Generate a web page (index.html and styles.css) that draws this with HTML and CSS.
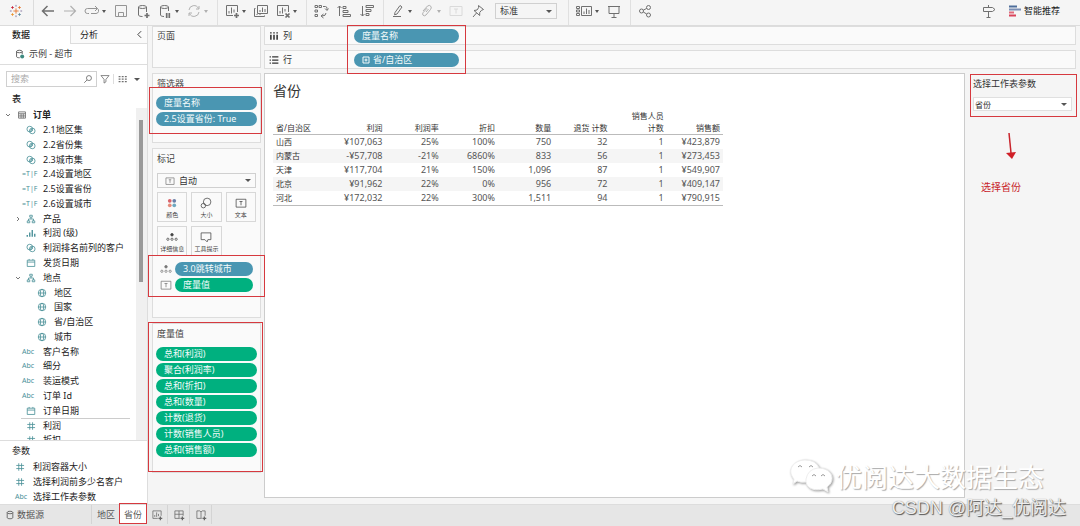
FILE: index.html
```html
<!DOCTYPE html>
<html lang="zh-CN">
<head>
<meta charset="utf-8">
<meta name="viewport" content="width=device-width, initial-scale=1">
<title>示例 - 超市</title>
<link rel="stylesheet" href="styles.css">
</head>
<body>
<svg class="sprite" aria-hidden="true">
  <symbol id="back" viewBox="0 0 16 16"><path d="M14 8H2.500M7.500 3L2.500 8l5 5" stroke-width="1.500"/></symbol>
  <symbol id="forward" viewBox="0 0 16 16"><path d="M2 8h11.500M8.500 3l5 5-5 5" stroke-width="1.200"/></symbol>
  <symbol id="replay" viewBox="0 0 16 16"><path d="M5 10.500H3.500a2.500 2.500 0 0 1 0-5H13M11 3l2.500 2.500L11 8M13.500 5.500q1.500 1 1 3-.5 2-2.500 2H7"/></symbol>
  <symbol id="save" viewBox="0 0 16 16"><path d="M2.500 2.500h11v11h-11zM5.500 13v-3.500h5V13"/></symbol>
  <symbol id="dbadd" viewBox="0 0 16 16"><path d="M3.500 4v8c0 1 2 1.500 4 1.500M11.500 4v5"/><ellipse cx="7.500" cy="4" rx="4" ry="1.500"/><path d="M12 10v5M9.500 12.500h5" stroke-width="1.700"/></symbol>
  <symbol id="dbpause" viewBox="0 0 16 16"><path d="M3.500 4v8c0 1 2 1.500 3.500 1.500M11.500 4v4"/><ellipse cx="7.500" cy="4" rx="4" ry="1.500"/><path d="M9.700 10v5M12.300 10v5" stroke-width="1.700"/></symbol>
  <symbol id="refresh" viewBox="0 0 16 16"><path d="M3 7a5 5 0 0 1 9.500-1.500M13 9a5 5 0 0 1-9.500 1.500M13 3v3h-3M3 13v-3h3"/></symbol>
  <symbol id="newsheet" viewBox="0 0 16 16"><path d="M9 12.500H2.500v-10h11V9M5 10.500V8M7.500 10.500v-6M10 9.500V6.500"/><path d="M12.500 10v5M10 12.500h5" stroke-width="1.700"/></symbol>
  <symbol id="dupsheet" viewBox="0 0 16 16"><path d="M4.500 2.500h10v8h-10zM2.500 5.500h-1v8h10v-1M7 9V7M9.500 9V4.500M12 9V6M4 12v-1M7 12v-1"/></symbol>
  <symbol id="clearsheet" viewBox="0 0 16 16"><path d="M9 12.500H2.500v-10h11V9M5 10.500V8M7.500 10.500v-6M10 8.500V6"/><path d="M10.500 10.500l4 4M14.500 10.500l-4 4" stroke-width="1.700"/></symbol>
  <symbol id="swap" viewBox="0 0 16 16"><path d="M2 2.500h2.500v2H2zM6 2.500h2.500v2H6zM2 7h2.500v2H2zM2 11.500h2.500v2H2zM10 3.500h2.500q1.500 0 1.500 2V7M12 5.500l2 2 1.500-2M13 10q0 3-4 3M10.500 11L8 13l2.500 2"/></symbol>
  <symbol id="sortasc" viewBox="0 0 16 16"><path d="M3.500 13V3M1.500 5l2-2 2 2M7 3.500h3v2H7zM7 7.500h5v2H7zM7 11.500h7.500v2H7z"/></symbol>
  <symbol id="sortdesc" viewBox="0 0 16 16"><path d="M3.500 3v10M1.500 11l2 2 2-2M7 2.500h7.500v2H7zM7 6.500h5v2H7zM7 10.500h3v2H7z"/></symbol>
  <symbol id="pen" viewBox="0 0 16 16"><path d="M5 9.500l5-7 2 1.500-5 7-2.500.8zM3 13.500h8"/></symbol>
  <symbol id="clip" viewBox="0 0 16 16"><path d="M4 8l4.500-5q2-1.500 3.500.5.800 1.300-.5 3L7 12q-1.500 1.500-3 .2-1-1.200.2-2.700L8 5.200M7 9l2.500-3"/></symbol>
  <symbol id="textbox" viewBox="0 0 16 16"><path d="M2 3.500h12v9H2zM6 6h4M8 6v4.500"/></symbol>
  <symbol id="pin" viewBox="0 0 16 16"><path d="M8.500 2.500l5 4-2 .8-1.800 2.200v3L4 7.500l3-.5 1.600-2.300zM6.500 10L3 14"/></symbol>
  <symbol id="cards" viewBox="0 0 18 16"><path d="M6.500 3.500h10v9h-10zM9 11V8.500M11.500 11V5.500M14 11V7M1.500 3.500h3v2h-3zM1.500 7h3v2h-3zM1.500 10.500h3v2h-3z"/></symbol>
  <symbol id="present" viewBox="0 0 16 16"><path d="M2 3.500h12M3 3.500v7h10v-7M8 10.500V14M5.500 14.500h5"/></symbol>
  <symbol id="share" viewBox="0 0 16 16"><circle cx="4.500" cy="8" r="2"/><circle cx="11.500" cy="4.500" r="2"/><circle cx="11.500" cy="12" r="2"/><path d="M6.300 7.200l3.400-1.800M6.300 9l3.400 2"/></symbol>
  <symbol id="signpost" viewBox="0 0 16 16"><path d="M2.500 4.500h9l2.500 2-2.500 2h-9zM7.500 2v2.500M7.500 8.500v6M5.500 14.500h4"/></symbol>
  <symbol id="db" viewBox="0 0 16 16"><path d="M3.500 4v8c0 1.500 2 2 4.500 2s4.500-.5 4.500-2V4"/><ellipse cx="8" cy="4" rx="4.500" ry="2"/></symbol>
  <symbol id="search" viewBox="0 0 16 16"><circle cx="9.500" cy="6.500" r="4"/><path d="M6.500 9.500L2 14"/></symbol>
  <symbol id="funnel" viewBox="0 0 16 16"><path d="M1.500 2.500h13L9.500 8.500v4l-3 2v-6z"/></symbol>
  <symbol id="listview" viewBox="0 0 16 16"><path d="M1 4h3M6 4h3M11 4h3M1 8h3M6 8h3M11 8h3M1 12h3M6 12h3M11 12h3" stroke-width="2"/></symbol>
  <symbol id="table" viewBox="0 0 16 16"><path d="M2.500 3h11v10h-11zM2.500 6h11M2.500 9.500h11M6.500 6v7M10 6v7"/></symbol>
  <symbol id="set" viewBox="0 0 16 16"><circle cx="6" cy="6.500" r="4.500"/><circle cx="10" cy="9.500" r="4.500"/><path d="M6 9l4-2.500M7 11l4-3"/></symbol>
  <symbol id="hier" viewBox="0 0 16 16"><path d="M6 2h4v3H6zM2 11h4v3H2zM10 11h4v3h-4zM8 5v3M4 11V8h8v3"/></symbol>
  <symbol id="hist" viewBox="0 0 16 16"><path d="M2 14v-3M6 14V7M10 14V3M14 14V9" stroke-width="2.200"/></symbol>
  <symbol id="date" viewBox="0 0 16 16"><path d="M2 3.500h12v10H2zM2 6.500h12M5 1.500v2M11 1.500v2"/></symbol>
  <symbol id="globe" viewBox="0 0 16 16"><circle cx="8" cy="8" r="6"/><ellipse cx="8" cy="8" rx="2.700" ry="6"/><path d="M2 8h12"/></symbol>
  <symbol id="num" viewBox="0 0 16 16"><path d="M6 2v12M10.500 2v12M2 5.500h12.500M2 10.500h12.500"/></symbol>
  <symbol id="detail" viewBox="0 0 16 16"><circle cx="8" cy="5" r="1.700" fill="currentColor"/><circle cx="2.500" cy="11" r="1.500"/><circle cx="8" cy="11" r="1.500"/><circle cx="13.500" cy="11" r="1.500"/></symbol>
  <symbol id="size" viewBox="0 0 16 16"><circle cx="9.500" cy="6.500" r="5"/><circle cx="4.500" cy="11.500" r="3"/></symbol>
  <symbol id="tip" viewBox="0 0 16 16"><path d="M1.500 2.500h13v9h-4l-1 3-3-3h-5z"/></symbol>
  <symbol id="tbox" viewBox="0 0 16 16"><path d="M1.500 3h13v10.500h-13zM6 6h4M8 6v5"/></symbol>
  <symbol id="dashadd" viewBox="0 0 16 16"><path d="M9 12.500H2.500v-10h11V9M2.500 7h11M8 2.500v10"/><path d="M12.500 10v5M10 12.500h5" stroke-width="1.700"/></symbol>
  <symbol id="storyadd" viewBox="0 0 16 16"><path d="M9 12.500H2.500v-10h4L8 4l1.500-1.500h4V9M8 4v8"/><path d="M12.500 10v5M10 12.500h5" stroke-width="1.700"/></symbol>
</svg>

<header class="toolbar">
  <div class="logo"><svg viewBox="0 0 16 16"><path d="M8 5v6M5 8h6" stroke="#e8762c"/><path d="M4 2.500v3M2.500 4h3" stroke="#c72037"/><path d="M12 2.500v3M10.500 4h3" stroke="#e8762c"/><path d="M4 10.500v3M2.500 12h3" stroke="#eb912c"/><path d="M12 10.500v3M10.500 12h3" stroke="#59879b"/><path d="M8 1v2M8 13v2M1 8h2M13 8h2" stroke="#7b6a9a"/></svg></div>
  <div class="group">
    <button class="tool" aria-label="后退"><svg class="icon"><use href="#back"/></svg></button>
    <button class="tool faint" aria-label="前进"><svg class="icon"><use href="#forward"/></svg></button>
    <button class="tool soft" aria-label="重放"><svg class="icon"><use href="#replay"/></svg><i class="caret"></i></button>
    <button class="tool soft" aria-label="保存"><svg class="icon"><use href="#save"/></svg></button>
    <button class="tool" aria-label="新建数据源"><svg class="icon"><use href="#dbadd"/></svg></button>
    <button class="tool" aria-label="暂停更新"><svg class="icon"><use href="#dbpause"/></svg><i class="caret"></i></button>
    <button class="tool faint" aria-label="刷新"><svg class="icon"><use href="#refresh"/></svg><i class="caret"></i></button>
  </div>
  <div class="group">
    <button class="tool" aria-label="新建工作表"><svg class="icon"><use href="#newsheet"/></svg><i class="caret"></i></button>
    <button class="tool" aria-label="复制工作表"><svg class="icon"><use href="#dupsheet"/></svg></button>
    <button class="tool" aria-label="清除工作表"><svg class="icon"><use href="#clearsheet"/></svg><i class="caret"></i></button>
  </div>
  <div class="group sorts">
    <button class="tool" aria-label="交换行和列"><svg class="icon"><use href="#swap"/></svg></button>
    <button class="tool" aria-label="升序"><svg class="icon"><use href="#sortasc"/></svg></button>
    <button class="tool" aria-label="降序"><svg class="icon"><use href="#sortdesc"/></svg></button>
  </div>
  <div class="group formats">
    <button class="tool" aria-label="突出显示"><svg class="icon"><use href="#pen"/></svg><i class="caret"></i></button>
    <button class="tool faint" aria-label="组成员"><svg class="icon"><use href="#clip"/></svg><i class="caret"></i></button>
    <button class="tool ghost" aria-label="标签"><svg class="icon"><use href="#textbox"/></svg></button>
    <button class="tool" aria-label="固定轴"><svg class="icon"><use href="#pin"/></svg></button>
    <div class="select fit"><select aria-label="适合"><option>标准</option></select><i class="caret"></i></div>
  </div>
  <div class="group">
    <button class="tool" aria-label="显示卡"><svg class="icon wide"><use href="#cards"/></svg><i class="caret"></i></button>
    <button class="tool" aria-label="演示模式"><svg class="icon"><use href="#present"/></svg></button>
  </div>
  <div class="group last">
    <button class="tool" aria-label="共享"><svg class="icon"><use href="#share"/></svg></button>
  </div>
  <div class="right-tools">
    <button class="tool" aria-label="导览"><svg class="icon"><use href="#signpost"/></svg></button>
    <button class="tool showme"><svg class="icon small" viewBox="0 0 12 12"><path d="M0 1.500h8" stroke="#4e6e9b" stroke-width="2"/><path d="M0 4.500h12" stroke="#7b8fb5" stroke-width="2"/><path d="M0 7.500h5" stroke="#e06a7a" stroke-width="2"/><path d="M0 10.500h7" stroke="#d9435a" stroke-width="2"/></svg>智能推荐</button>
  </div>
</header>

<div class="workspace">
  <aside class="data">
    <div class="tabs"><button class="tab on">数据</button><button class="tab">分析<svg class="fold" viewBox="0 0 6 10"><path d="M5 1L1 5l4 4"/></svg></button></div>
    <div class="source"><svg class="mini" viewBox="0 0 16 16"><path d="M2.500 4v8c0 1.500 2 2 5 2M11.500 4v4"/><ellipse cx="7" cy="4" rx="4.500" ry="2"/><circle cx="11.500" cy="12" r="3.200" class="badge"/></svg>示例 - 超市</div>
    <div class="searchbar">
      <label class="searchbox"><input type="text" placeholder="搜索" aria-label="搜索"><svg class="mini"><use href="#search"/></svg></label>
      <button class="tool" aria-label="筛选"><svg class="mini"><use href="#funnel"/></svg></button>
      <button class="tool view" aria-label="视图"><svg class="mini"><use href="#listview"/></svg><i class="caret"></i></button>
    </div>
    <h2 class="heading">表</h2>
    <div class="treewrap">
      <div class="tree">
        <ul class="fields">
          <li class="root"><svg class="twist" viewBox="0 0 6 6"><path d="M1 2l2 2 2-2"/></svg><svg class="mini grey"><use href="#table"/></svg>订单</li>
          <li><svg class="mini"><use href="#set"/></svg>2.1地区集</li>
          <li><svg class="mini"><use href="#set"/></svg>2.2省份集</li>
          <li><svg class="mini"><use href="#set"/></svg>2.3城市集</li>
          <li><span class="type">=T|F</span>2.4设置地区</li>
          <li><span class="type">=T|F</span>2.5设置省份</li>
          <li><span class="type">=T|F</span>2.6设置城市</li>
          <li class="branch"><svg class="twist" viewBox="0 0 6 6"><path d="M2 1l2 2-2 2"/></svg><svg class="mini"><use href="#hier"/></svg>产品</li>
          <li><svg class="mini"><use href="#hist"/></svg>利润 (级)</li>
          <li><svg class="mini"><use href="#set"/></svg>利润排名前列的客户</li>
          <li><svg class="mini"><use href="#date"/></svg>发货日期</li>
          <li class="branch"><svg class="twist" viewBox="0 0 6 6"><path d="M1 2l2 2 2-2"/></svg><svg class="mini"><use href="#hier"/></svg>地点</li>
          <li class="deep"><svg class="mini"><use href="#globe"/></svg>地区</li>
          <li class="deep"><svg class="mini"><use href="#globe"/></svg>国家</li>
          <li class="deep"><svg class="mini"><use href="#globe"/></svg>省/自治区</li>
          <li class="deep"><svg class="mini"><use href="#globe"/></svg>城市</li>
          <li><span class="type">Abc</span>客户名称</li>
          <li><span class="type">Abc</span>细分</li>
          <li><span class="type">Abc</span>装运模式</li>
          <li><span class="type">Abc</span>订单 Id</li>
          <li><svg class="mini"><use href="#date"/></svg>订单日期</li>
        </ul>
        <ul class="measures">
          <li><svg class="mini"><use href="#num"/></svg>利润</li>
          <li><svg class="mini"><use href="#num"/></svg>折扣</li>
        </ul>
      </div>
      <div class="scroll"><div class="thumb"></div></div>
    </div>
    <section class="params">
      <h2>参数</h2>
      <ul>
        <li><svg class="mini"><use href="#num"/></svg>利润容器大小</li>
        <li><svg class="mini"><use href="#num"/></svg>选择利润前多少名客户</li>
        <li><span class="type">Abc</span>选择工作表参数</li>
      </ul>
    </section>
  </aside>

  <div class="shelves">
    <section class="card pages"><h3>页面</h3></section>
    <section class="card filters"><h3>筛选器</h3>
      <div class="pills marked"><span class="pill blue">度量名称</span><span class="pill blue">2.5设置省份: True</span></div>
    </section>
    <section class="card marks"><h3>标记</h3>
      <div class="select marktype"><svg class="mini"><use href="#tbox"/></svg><select aria-label="标记类型"><option>自动</option></select><i class="caret"></i></div>
      <div class="markgrid">
        <button><svg class="markicon" viewBox="0 0 16 16"><g stroke="none"><circle cx="5" cy="5" r="2.500" fill="#d9626a"/><circle cx="11" cy="5" r="2.500" fill="#6a7fa8"/><circle cx="5" cy="11" r="2.500" fill="#e58b7b"/><circle cx="11" cy="11" r="2.500" fill="#6fa8c0"/></g></svg>颜色</button>
        <button><svg class="markicon"><use href="#size"/></svg>大小</button>
        <button><svg class="markicon"><use href="#tbox"/></svg>文本</button>
        <button><svg class="markicon"><use href="#detail"/></svg>详细信息</button>
        <button><svg class="markicon"><use href="#tip"/></svg>工具提示</button>
      </div>
      <div class="markpills marked">
        <div><svg class="markicon"><use href="#detail"/></svg><span class="pill blue">3.0跳转城市</span></div>
        <div><svg class="markicon"><use href="#tbox"/></svg><span class="pill green">度量值</span></div>
      </div>
    </section>
    <section class="card values marked"><h3>度量值</h3>
      <div class="pills">
        <span class="pill green">总和(利润)</span><span class="pill green">聚合(利润率)</span><span class="pill green">总和(折扣)</span><span class="pill green">总和(数量)</span><span class="pill green">计数(退货)</span><span class="pill green">计数(销售人员)</span><span class="pill green">总和(销售额)</span>
      </div>
    </section>
  </div>

  <main class="main">
    <div class="axes">
      <div class="axis"><svg class="mini" viewBox="0 0 16 16"><path d="M3 2v2M8 2v2M13 2v2M3 6v8M8 6v8M13 6v8" stroke-width="2.500"/></svg><span class="name">列</span><span class="pill blue">度量名称</span></div>
      <div class="axis"><svg class="mini" viewBox="0 0 16 16"><path d="M1 3h2M1 8h2M1 13h2M5 3h10M5 8h10M5 13h10" stroke-width="2"/></svg><span class="name">行</span><span class="pill blue"><svg class="plus" viewBox="0 0 8 8"><path d="M1 1h6v6H1zM2.500 4h3M4 2.500v3"/></svg>省/自治区</span></div>
    </div>
    <div class="stage">
      <section class="canvas">
        <h1>省份</h1>
        <table>
          <thead><tr><th>省/自治区</th><th>利润</th><th>利润率</th><th>折扣</th><th>数量</th><th>退货 计数</th><th>销售人员<br>计数</th><th>销售额</th></tr></thead>
          <tbody>
            <tr><th>山西</th><td>¥107,063</td><td>25%</td><td>100%</td><td>750</td><td>32</td><td>1</td><td>¥423,879</td></tr>
            <tr><th>内蒙古</th><td>-¥57,708</td><td>-21%</td><td>6860%</td><td>833</td><td>56</td><td>1</td><td>¥273,453</td></tr>
            <tr><th>天津</th><td>¥117,704</td><td>21%</td><td>150%</td><td>1,096</td><td>87</td><td>1</td><td>¥549,907</td></tr>
            <tr><th>北京</th><td>¥91,962</td><td>22%</td><td>0%</td><td>956</td><td>72</td><td>1</td><td>¥409,147</td></tr>
            <tr><th>河北</th><td>¥172,032</td><td>22%</td><td>300%</td><td>1,511</td><td>94</td><td>1</td><td>¥790,915</td></tr>
          </tbody>
        </table>
      </section>
      <aside class="side">
        <div class="control">
          <label for="param">选择工作表参数</label>
          <div class="select"><select id="param"><option>省份</option></select><i class="caret"></i></div>
        </div>
        <svg class="arrow" viewBox="0 0 10 28"><path d="M3 1l2 20" stroke="#c8242b" stroke-width="1.500"/><path d="M0 21l10-1-4 7z" fill="#d01f27" stroke="none"/></svg>
        <p class="note">选择省份</p>
      </aside>
    </div>
  </main>
</div>

<footer class="sheets">
  <button class="datasource"><svg class="mini"><use href="#db"/></svg>数据源</button>
  <button class="sheet">地区</button>
  <button class="sheet active marked">省份</button>
  <button class="add" aria-label="新建工作表"><svg class="markicon"><use href="#newsheet"/></svg></button>
  <button class="add" aria-label="新建仪表板"><svg class="markicon"><use href="#dashadd"/></svg></button>
  <button class="add" aria-label="新建故事"><svg class="markicon"><use href="#storyadd"/></svg></button>
</footer>

<div class="brand">
  <svg viewBox="0 0 44 36"><g class="shade"><path d="M17 24Q12 25 8 23l-4 3 1-5C-3 12 5 2 16 2q11 0 14 8"/><path d="M29 10c15 0 18 13 9 19l1 5-5-3C22 34 16 28 17 21q2-10 12-11z"/><path d="M9 9q2-3 4 0M20 9q2-3 4 0M23 18q2-3 4 0M32 18q2-3 4 0"/></g></svg>
  <span>优阅达大数据生态</span>
</div>
<div class="credit">CSDN @阿达_优阅达</div>
</body>
</html>
```

FILE: styles.css
```css
* { box-sizing: border-box; }
body {
  margin: 0; height: 100vh; display: flex; flex-direction: column; overflow: hidden;
  position: relative; background: #f5f5f5; color: #333;
  font: 9px/14px "Noto Sans", "Noto Sans CJK SC", sans-serif;
}
h1, h2, h3, p, ul { margin: 0; padding: 0; font-weight: 400; }
ul { list-style: none; }
button, select, input { font: inherit; color: inherit; margin: 0; padding: 0; border: 0; background: none; }
svg { fill: none; stroke: currentColor; stroke-width: 1; flex: none; }
.sprite { position: absolute; width: 0; height: 0; }
.icon { width: 16px; height: 16px; }
.icon.wide { width: 18px; }
.icon.small { width: 12px; height: 12px; }
.mini { width: 10px; height: 10px; stroke-width: 1.3; }
.markicon { width: 12px; height: 12px; }
.caret { flex: none; width: 0; height: 0; border: 3px solid transparent; border-top-color: #555; border-bottom: 0; }

.toolbar { flex: none; height: 26px; display: flex; border-bottom: 1px solid #dcdcdc; background: #f5f5f5; }
.logo { width: 34px; padding: 4px 9px; border-right: 1px solid #dcdcdc; }
.logo svg { width: 14px; height: 14px; display: block; }
.group { display: flex; align-items: center; gap: 6px; padding: 0 8px 3px 6px; border-right: 1px solid #e0e0e0; }
.group.last { border: 0; }
.sorts { gap: 7px; }
.formats { padding-right: 11px; }
.tool { display: flex; align-items: center; color: #707070; }
.tool .caret { margin-left: 2px; border-width: 3px 2px 0; margin-right: 1px; }
.soft { color: #959595; }
.faint { color: #b0b0b0; }
.faint .caret { border-top-color: #b0b0b0; }
.ghost { color: #dadada; }
.select { position: relative; display: flex; align-items: center; background: #fff; border: 1px solid #d0d0d0; }
.select select { appearance: none; flex: 1; min-width: 0; height: 100%; padding-left: 4px; }
.select .caret { position: absolute; right: 4px; pointer-events: none; }
.fit { width: 62px; height: 16px; margin-left: 3px; background: #f5f5f5; }
.right-tools { margin-left: auto; display: flex; align-items: center; gap: 12px; padding: 0 20px 3px 0; }
.showme { gap: 3px; color: #222; }

.workspace { flex: 1; min-height: 0; display: flex; }
.data { width: 148px; flex: none; display: flex; flex-direction: column; background: #fff; border-right: 1px solid #ddd; color: #222; }
.tabs { display: flex; height: 18px; flex: none; }
.tab { width: 70px; text-align: left; padding-left: 12px; }
.tab.on { font-weight: 500; }
.tab:not(.on) { flex: 1; display: flex; align-items: center; justify-content: space-between; padding: 0 5px 0 9px; background: #fafafa; border: solid #ddd; border-width: 0 0 1px 1px; }
.fold { width: 5px; height: 9px; }
.source { height: 21px; flex: none; display: flex; align-items: center; gap: 4px; padding-left: 15px; border-bottom: 1px solid #ddd; color: #444; }
.badge { fill: #3f8a80; stroke: none; }
.searchbar { display: flex; align-items: center; gap: 3px; padding: 6px 5px 0 6px; }
.searchbox { width: 91px; height: 16px; display: flex; align-items: center; border: 1px solid #d0d0d0; padding: 0 3px 0 4px; color: #666; }
.searchbox input { flex: 1; min-width: 0; outline: 0; }
.searchbox input::placeholder { color: #aaa; }
.view { gap: 4px; padding-left: 4px; border-left: 1px solid #ddd; }
.view .caret { border-width: 3px 3px 0; }
.heading { font-size: 9px; font-weight: 500; padding: 5px 12px 0; height: 21px; }
.treewrap { flex: 1; min-height: 0; display: flex; }
.tree { flex: 1; overflow: hidden; }
.fields { height: 310px; display: grid; grid-auto-rows: 1fr; }
.tree li, .params li { display: flex; align-items: center; padding-left: 26px; gap: 7px; white-space: nowrap; }
.tree svg, .params svg { color: #4a9098; }
.tree li.root { padding-left: 5px; gap: 6px; font-weight: 600; }
.tree li.branch { padding-left: 15px; gap: 5px; }
.tree li.branch .mini { margin-right: 2px; }
.tree li.deep { padding-left: 37px; gap: 7px; }
.tree .twist { width: 6px; height: 6px; color: #777; }
.tree .grey { color: #666; }
.type { width: 16px; margin: 0 -2px 0 -4px; font-size: 7px; color: #4a9098; white-space: nowrap; }
.measures { border-top: 1px solid #ccc; margin: 0 6px 0 21px; }
.measures li { height: 14px; }
.tree .measures li { padding-left: 5px; }
.scroll { width: 11px; background: #f0f0f0; padding: 12px 4px 0 3px; }
.thumb { height: 162px; background: #999; }
.params { flex: none; border-top: 1px solid #ddd; padding: 2px 0 0; }
.params h2 { font-size: 9px; padding-left: 12px; height: 16px; line-height: 16px; }
.params li { height: 15px; padding-left: 15px; gap: 8px; }
.params .type { margin-left: 0; margin-right: -6px; }

.shelves { width: 116px; flex: none; display: flex; flex-direction: column; gap: 5px; padding-left: 4px; }
.card { width: 109px; position: relative; background: #fafafa; border: 1px solid #ddd; padding: 3px 4px; }
.card h3 { font-size: 9px; height: 14px; line-height: 12px; color: #444; }
.pages { height: 42px; }
.filters { height: 70px; padding-top: 4px; }
.marks { height: 170px; padding-top: 4px; }
.values { height: 150px; padding-top: 4px; }
.pills { display: flex; flex-direction: column; gap: 2px; }
.values .pills { padding-top: 5px; }
.filters .pills { padding-top: 4px; }
.pill { display: flex; align-items: center; height: 14px; border-radius: 7px; padding: 0 8px; color: #f4fbfb; white-space: nowrap; }
.card .pills .pill { margin: 0 -1px; }
.blue { background: #4a96b2; }
.green { background: #00b07f; }
.marked { position: relative; }
.marked::after { content: ""; position: absolute; inset: -4px; border: 1px solid #d6393f; pointer-events: none; }
.filters .marked::after { inset: -5px -6px -8px -8px; }
.values.marked::after { inset: -2px -3px 0 -5px; }
.markpills.marked::after { inset: -7px -9px -5px -9px; }
.marktype { height: 15px; margin-top: 6px; background: #fafafa; padding-left: 7px; }
.marktype .mini { color: #888; }
.markgrid { display: grid; grid-template-columns: repeat(3, 1fr); gap: 4px; padding-top: 4px; height: 67px; overflow: hidden; }
.markgrid button { height: 30px; border: 1px solid #d8d8d8; display: flex; flex-direction: column; align-items: center; gap: 2px; padding-top: 4px; font-size: 6px; line-height: 9px; white-space: nowrap; color: #444; }
.markpills { display: flex; flex-direction: column; gap: 2px; margin-top: 7px; padding: 0 3px; }
.markpills div { display: flex; align-items: center; gap: 3px; color: #777; }
.markpills .pill { flex: 1; }

.main { flex: 1; min-width: 0; display: flex; flex-direction: column; padding-bottom: 6px; }
.axes { position: relative; display: flex; flex-direction: column; gap: 5px; margin-right: 4px; }
.axes::after { content: ""; position: absolute; left: 83px; top: -1px; width: 117px; height: 47px; border: 1px solid #d6393f; pointer-events: none; }
.axis { height: 19px; display: flex; align-items: center; border: 1px solid #ddd; background: #fafafa; padding-left: 4px; }
.axis .name { width: 75px; padding-left: 4px; }
.axis .pill { width: 105px; }
.plus { width: 8px; height: 8px; margin-right: 3px; }
.stage { flex: 1; min-height: 0; display: flex; margin-top: 4px; }
.canvas { flex: 1; min-width: 0; background: #fff; border: 1px solid #ccc; padding: 7px 8px; }
.canvas h1 { font-size: 14px; line-height: 20px; }
table { width: 450px; table-layout: fixed; border-collapse: collapse; margin-top: 9px; border-bottom: 1px solid #bbb; color: #555; }
th, td { padding: 0 3px; text-align: right; font-weight: 400; height: 14px; line-height: 14px; white-space: nowrap; }
th { font-size: 8px; color: #333; }
thead th { width: 56px; vertical-align: bottom; line-height: 12px; border-bottom: 1px solid #bbb; }
th:first-child { text-align: left; }
tbody tr:nth-child(even) { background: #f5f5f5; }
.side { width: 115px; flex: none; padding: 1px 3px 0 5px; }
.control { border: 1px solid #d6393f; padding: 2px; height: 43px; }
.control label { display: block; height: 20px; line-height: 14px; }
.control .select { height: 14px; border-color: #e0e0e0; margin-right: 2px; font-size: 8px; }
.control select { padding-left: 1px; }
.arrow { display: block; width: 10px; height: 28px; margin: 15px 0 20px 36px; }
.note { font-size: 10px; color: #c8242b; padding-left: 11px; }

.sheets { flex: none; height: 22px; display: flex; background: #e6e6e6; border-top: 1px solid #ddd; padding-bottom: 2px; color: #555; }
.datasource { width: 92px; display: flex; align-items: center; gap: 2px; padding-left: 5px; border-right: 1px solid #d4d4d4; }
.sheet { width: 28px; }
.sheet.active { width: 26px; background: #fff; }
.sheet.active::after { inset: -2px -1px 0; }
.add { width: 22px; display: flex; align-items: center; justify-content: center; border-right: 1px solid #d4d4d4; color: #666; }

.brand { position: absolute; right: 36px; bottom: 32px; display: flex; align-items: center; gap: 3px; font: 26px/36px "Noto Sans CJK SC", sans-serif; color: #fff; text-shadow: 1px 1px 1px #aaa; pointer-events: none; }
.brand svg { width: 44px; height: 36px; filter: drop-shadow(1px 1px 1px #999); }
.shade { fill: #fff; stroke: #eee; }
.shade path:last-child { stroke: #999; }
.credit { position: absolute; right: 14px; bottom: 5px; font: 18px/26px "Liberation Sans", "Noto Sans CJK SC", sans-serif; color: #eee; text-shadow: 1px 1px 1px #555, 0 0 1px #888; pointer-events: none; }
```
